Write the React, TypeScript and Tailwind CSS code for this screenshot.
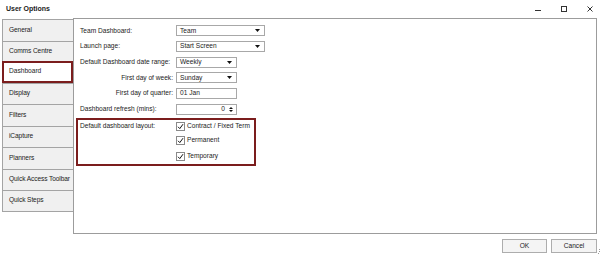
import React from "react";

const tabs = [
  "General",
  "Comms Centre",
  "Dashboard",
  "Display",
  "Filters",
  "iCapture",
  "Planners",
  "Quick Access Toolbar",
  "Quick Steps",
];

function Arrow() {
  return (
    <svg width="5" height="3" viewBox="0 0 5 3" className="shrink-0">
      <path d="M0 0 L5 0 L2.5 3 Z" fill="#111" />
    </svg>
  );
}

function Select({ value, wide }: { value: string; wide?: boolean }) {
  return (
    <div
      className={`${wide ? "w-[89px]" : "w-[61px]"} h-[11px] border border-[#a8a8a8] bg-white flex items-center justify-between pl-[3px] pr-[4px]`}
    >
      <span className="leading-none">{value}</span>
      <Arrow />
    </div>
  );
}

function Check({ label }: { label: string }) {
  return (
    <div className="flex items-center gap-[2px]">
      <div className="w-[9px] h-[9px] border border-[#8a8a8a] bg-white flex items-center justify-center">
        <svg width="7" height="7" viewBox="0 0 7 7">
          <path d="M1 3.8 L2.8 5.6 L6 1.2" stroke="#111" strokeWidth="1" fill="none" />
        </svg>
      </div>
      <span className="leading-none">{label}</span>
    </div>
  );
}

export default function App() {
  return (
    <div className="w-[601px] h-[257px] bg-white relative overflow-hidden whitespace-nowrap text-[#1b1b1b] text-[6.6px] font-['Liberation_Sans',Arial,sans-serif]">
      {/* title bar */}
      <div className="h-[18px] flex items-center justify-between pl-[6px] pr-[8px]">
        <span className="font-bold text-[7px] leading-none -mt-[1px]">User Options</span>
        <div className="flex items-center gap-[20px] -mt-[1px]">
          <svg width="6" height="6" viewBox="0 0 6 6">
            <path d="M0 4.5 H6" stroke="#333" strokeWidth="1" />
          </svg>
          <svg width="6" height="6" viewBox="0 0 6 6">
            <rect x="0.5" y="0.5" width="5" height="5" stroke="#333" strokeWidth="1" fill="none" />
          </svg>
          <svg width="6" height="6" viewBox="0 0 6 6">
            <path d="M0.5 0.5 L5.5 5.5 M5.5 0.5 L0.5 5.5" stroke="#333" strokeWidth="1" />
          </svg>
        </div>
      </div>

      {/* body */}
      <div className="flex pl-[2px] pr-[4px]">
        <div className="w-[71px] mt-[1px] flex flex-col">
          {tabs.map((t, i) =>
            t === "Dashboard" ? (
              <div
                key={t}
                className="h-[21.5px] border-2 border-[#7b1d1d] bg-white flex items-center pl-[5px] -mt-[1px] relative"
              >
                <span className="leading-none">{t}</span>
              </div>
            ) : (
              <div
                key={t}
                className={`h-[21.5px] border-l border-t border-[#a4a4a4] bg-[#f0f0f0] flex items-center pl-[6px] ${
                  i === tabs.length - 1 ? "border-b" : ""
                }`}
              >
                <span className="leading-none tracking-[-0.1px]">{t}</span>
              </div>
            )
          )}
        </div>

        <div className="flex-1 h-[216px] border border-[#9c9c9c] pt-[4px]">
          <div className="flex flex-col">
            <div className="h-[15.7px] flex items-center pl-[6px]">
              <div className="w-[96px] leading-none">Team Dashboard:</div>
              <Select value="Team" wide />
            </div>
            <div className="h-[15.7px] flex items-center pl-[6px]">
              <div className="w-[96px] leading-none">Launch page:</div>
              <Select value="Start Screen" wide />
            </div>
            <div className="h-[15.7px] flex items-center pl-[6px]">
              <div className="w-[96px] leading-none">Default Dashboard date range:</div>
              <Select value="Weekly" />
            </div>
            <div className="h-[15.7px] flex items-center pl-[6px]">
              <div className="w-[96px] leading-none text-right pr-[3px]">First day of week:</div>
              <Select value="Sunday" />
            </div>
            <div className="h-[15.7px] flex items-center pl-[6px]">
              <div className="w-[96px] leading-none text-right pr-[3px]">First day of quarter:</div>
              <div className="w-[61px] h-[11px] border border-[#a8a8a8] bg-white flex items-center pl-[3px]">
                <span className="leading-none">01 Jan</span>
              </div>
            </div>
            <div className="h-[15.7px] flex items-center pl-[6px]">
              <div className="w-[96px] leading-none">Dashboard refresh (mins):</div>
              <div className="w-[61px] h-[11px] border border-[#a8a8a8] bg-white flex items-center justify-end pr-[3px] gap-[4px]">
                <span className="leading-none">0</span>
                <div className="flex flex-col gap-[1px]">
                  <svg width="4" height="2" viewBox="0 0 4 2">
                    <path d="M0 2 L4 2 L2 0 Z" fill="#111" />
                  </svg>
                  <svg width="4" height="2" viewBox="0 0 4 2">
                    <path d="M0 0 L4 0 L2 2 Z" fill="#111" />
                  </svg>
                </div>
              </div>
            </div>

            <div className="ml-[2px] mt-[1px] w-[180px] border-2 border-[#7b1d1d] flex flex-col pl-[2px]">
              <div className="h-[12px] flex items-center">
                <div className="w-[96px] leading-none">Default dashboard layout:</div>
                <Check label="Contract / Fixed Term" />
              </div>
              <div className="h-[16px] flex items-center">
                <div className="w-[96px]" />
                <Check label="Permanent" />
              </div>
              <div className="h-[16px] flex items-center">
                <div className="w-[96px]" />
                <Check label="Temporary" />
              </div>
            </div>
          </div>
        </div>
      </div>

      {/* buttons */}
      <div className="flex justify-end gap-[4px] pr-[4px] pt-[5px]">
        <div className="w-[45px] h-[14px] border border-[#adadad] bg-[#f4f4f4] flex items-center justify-center">
          <span className="leading-none">OK</span>
        </div>
        <div className="w-[46px] h-[14px] border border-[#adadad] bg-[#f4f4f4] flex items-center justify-center">
          <span className="leading-none">Cancel</span>
        </div>
      </div>
      <div className="absolute right-[1px] bottom-[3px] w-[2px] h-[5px] flex flex-col justify-between">
        <div className="w-[1px] h-[1px] bg-[#999] self-end" />
        <div className="w-[1px] h-[1px] bg-[#999] self-end" />
        <div className="w-[1px] h-[1px] bg-[#999]" />
      </div>
    </div>
  );
}
